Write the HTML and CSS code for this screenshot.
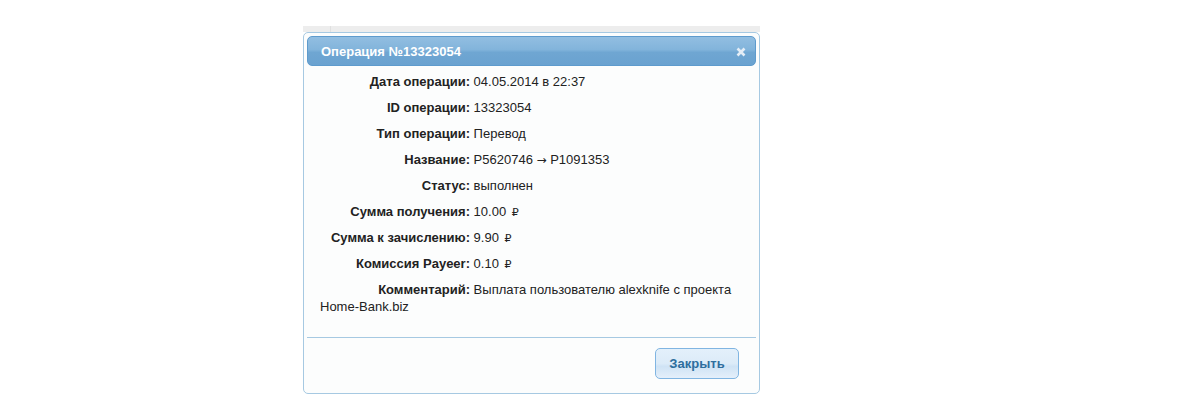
FILE: index.html
```html
<!DOCTYPE html>
<html lang="ru">
<head>
<meta charset="utf-8">
<title>Операция №13323054</title>
<link rel="stylesheet" href="styles.css">
</head>
<body>
<div class="page">
  <div class="backdrop-strip"><span class="strip-divider"></span></div>
  <div class="dialog">
    <div class="titlebar">
      <span class="title">Операция №13323054</span>
      <span class="close" aria-label="close">
        <svg width="10" height="10" viewBox="0 0 10 10"><path d="M1.5 1.5 L8.5 8.5 M8.5 1.5 L1.5 8.5" stroke="#e4edf6" stroke-width="2.6" stroke-linecap="butt"/></svg>
      </span>
    </div>
    <div class="content">
      <div class="row"><span class="label">Дата операции:</span> 04.05.2014 в 22:37</div>
      <div class="row"><span class="label">ID операции:</span> 13323054</div>
      <div class="row"><span class="label">Тип операции:</span> Перевод</div>
      <div class="row"><span class="label">Название:</span> P5620746 <span class="arrow">→</span> P1091353</div>
      <div class="row"><span class="label">Статус:</span> выполнен</div>
      <div class="row"><span class="label">Сумма получения:</span> 10.00 <span class="rub">₽</span></div>
      <div class="row"><span class="label">Сумма к зачислению:</span> 9.90 <span class="rub">₽</span></div>
      <div class="row"><span class="label">Комиссия Payeer:</span> 0.10 <span class="rub">₽</span></div>
      <div class="row"><span class="label">Комментарий:</span> Выплата пользователю alexknife с проекта Home-Bank.biz</div>
    </div>
    <div class="buttonpane">
      <button class="btn" type="button">Закрыть</button>
    </div>
  </div>
</div>
</body>
</html>
```

FILE: styles.css
```css
html, body {
  margin: 0;
  padding: 0;
  background: #ffffff;
}
body {
  font-family: "Liberation Sans", Arial, sans-serif;
  font-size: 13px;
  color: #222222;
}
.page {
  padding: 26px 0 0 303px;
  width: 457px;
}
.backdrop-strip {
  height: 6px;
  background: #ededed;
  display: flex;
}
.strip-divider {
  margin-left: 27px;
  width: 1px;
  background: #e0e0e0;
}
.dialog {
  width: 449px;
  height: 354px;
  border: 1px solid #a6c9e2;
  border-radius: 5px;
  padding: 3px;
  background: #fcfdfd;
  display: flex;
  flex-direction: column;
}
.titlebar {
  height: 28px;
  border: 1px solid #5e9bcd;
  border-radius: 5px;
  background: linear-gradient(to bottom, #92bee1 0%, #82b4db 45%, #6fa6d2 55%, #6aa2d0 100%);
  display: flex;
  align-items: center;
  justify-content: space-between;
  padding: 0 9px 0 13px;
}
.title {
  color: #ffffff;
  font-weight: bold;
  font-size: 13px;
}
.close {
  display: flex;
  width: 10px;
  height: 10px;
  margin-top: 1px;
}
.content {
  flex: 1;
  padding: 7px 13px 0 13px;
  display: flex;
  flex-direction: column;
  gap: 9px;
}
.row {
  line-height: 17px;
  height: 17px;
  color: #222222;
}
.row:last-child {
  height: auto;
}
.label {
  display: inline-block;
  width: 150px;
  text-align: right;
  font-weight: bold;
  color: #222222;
}
.arrow {
  font-family: "DejaVu Sans", sans-serif;
  font-size: 12px;
  line-height: 10px;
}
.rub {
  font-family: "DejaVu Sans", sans-serif;
  font-size: 11px;
  line-height: 10px;
  margin-left: 2px;
}
.buttonpane {
  border-top: 1px solid #a6c9e2;
  padding: 10px 17px 11px 0;
  display: flex;
  justify-content: flex-end;
}
.btn {
  width: 84px;
  height: 31px;
  border: 1px solid #80b5e2;
  border-radius: 5px;
  background: linear-gradient(to bottom, #e3f0fb 0%, #dcebf8 50%, #cfe3f5 60%, #e4effa 100%);
  color: #2e6e9e;
  font-family: "Liberation Sans", Arial, sans-serif;
  font-weight: bold;
  font-size: 13px;
  padding: 0;
}
```
